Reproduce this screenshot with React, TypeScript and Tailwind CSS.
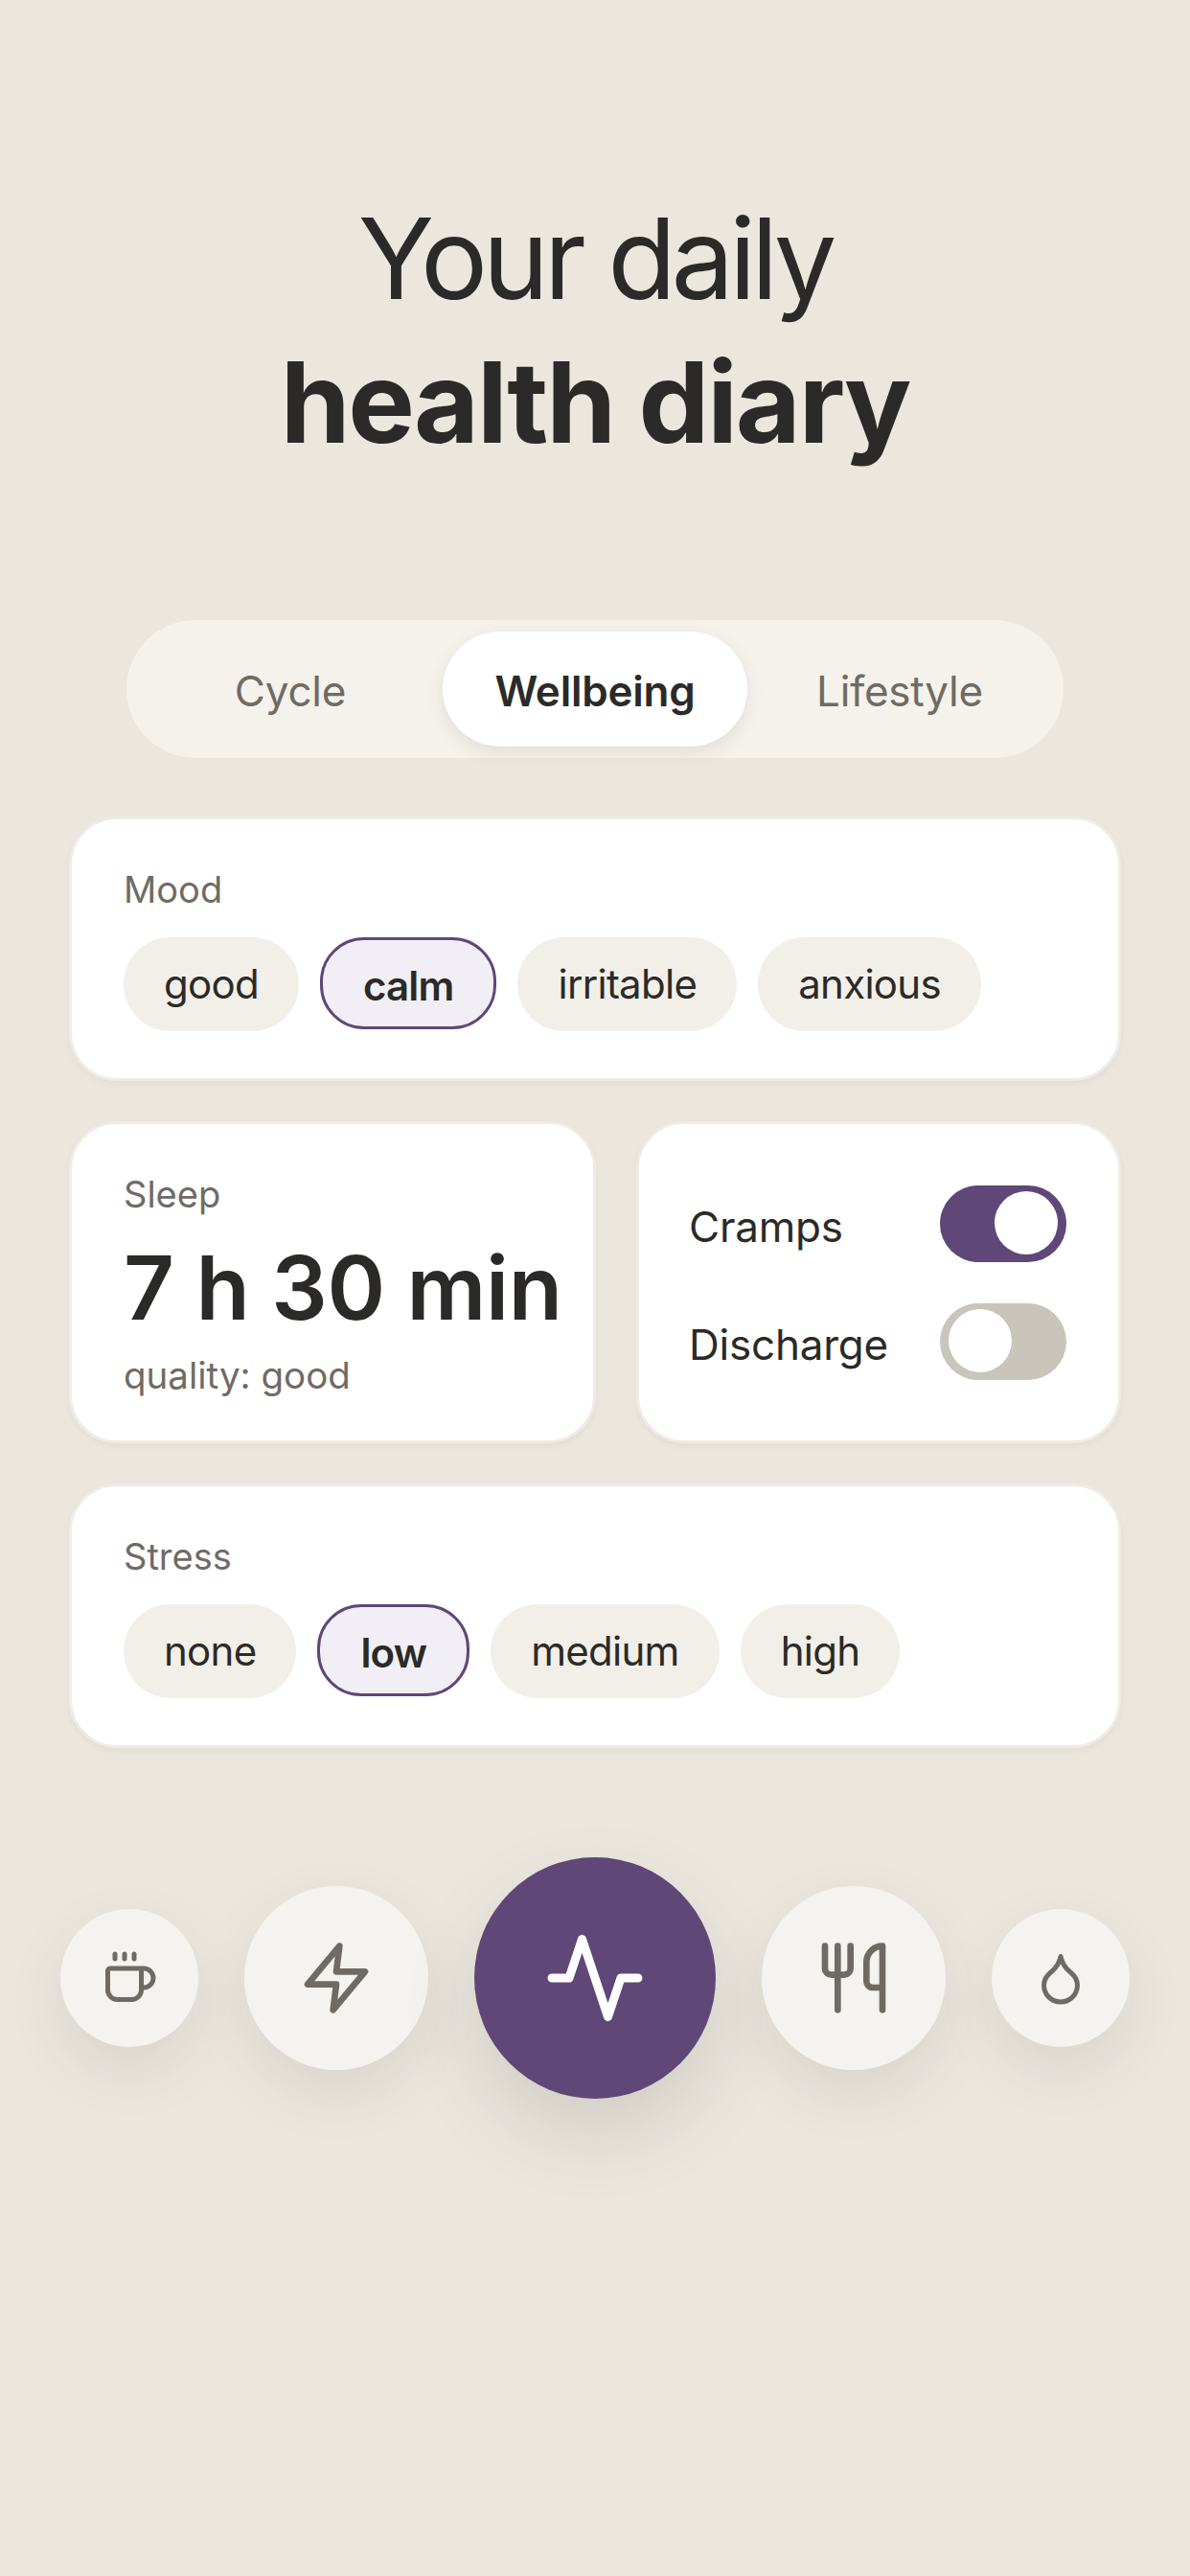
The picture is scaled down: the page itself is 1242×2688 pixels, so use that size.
import { Coffee, Droplet, Utensils } from "lucide-react";

function Chip({ label, active }: { label: string; active?: boolean }) {
  if (active) {
    return (
      <span className="flex h-[96px] items-center rounded-[46px] border-[3px] border-[#5f4778] bg-[#f1eff5] px-[42px] pt-[5px] text-[42px] font-semibold tracking-[-0.02em] text-[#2b2a28]">
        {label}
      </span>
    );
  }
  return (
    <span className="flex h-[98px] items-center rounded-[49px] bg-[#f2efe8] px-[42px] pb-[2px] text-[42px] tracking-[-0.017em] text-[#2b2a28]">{label}</span>
  );
}

function ChipCard({ title, chips, active }: { title: string; chips: string[]; active: string }) {
  return (
    <section className="flex h-[276px] flex-col rounded-[50px] border-[3px] border-[#f0ece5] bg-white px-[54px] pt-[50px] shadow-[0_3px_6px_rgba(60,50,40,0.05)]">
      <p className="text-[38px] leading-[46px] text-[#6f6b64]">{title}</p>
      <div className="mt-[27px] flex items-start gap-[22px]">
        {chips.map((chip) => (
          <Chip key={chip} label={chip} active={chip === active} />
        ))}
      </div>
    </section>
  );
}

function Toggle({ label, on }: { label: string; on?: boolean }) {
  return (
    <div className="flex items-center justify-between">
      <span className="pt-[6px] text-[44px] tracking-[-0.005em] text-[#2b2a28]">{label}</span>
      <span className={`flex h-[80px] w-[132px] items-start rounded-full px-[9px] pt-[6px] ${on ? "justify-end bg-[#5f4778]" : "justify-start bg-[#c9c5ba]"}`}>
        <span className="h-[66px] w-[66px] rounded-full bg-white" />
      </span>
    </div>
  );
}

function RoundButton({ size, children }: { size: "sm" | "md"; children: React.ReactNode }) {
  const box = size === "sm" ? "h-[144px] w-[144px]" : "h-[192px] w-[192px]";
  return (
    <div className={`flex ${box} items-center justify-center rounded-full bg-[#f5f3ef] text-[#6f6b64] shadow-[0_24px_60px_rgba(60,50,40,0.10)]`}>
      {children}
    </div>
  );
}

export default function App() {
  return (
    <main className="min-h-[2688px] bg-[#ebe7df] pt-[195px] font-['Inter',sans-serif] text-[#2b2a28]">
      <h1 className="text-center text-[117px] leading-[150px]">
        <span className="block font-normal tracking-[-0.045em]">Your daily</span>
        <span className="block font-bold tracking-[-0.018em]">health diary</span>
      </h1>

      <nav className="mx-[132px] mt-[152px] flex h-[144px] items-center rounded-[72px] bg-[#f5f2ec] px-[12px] text-[44px] tracking-[-0.005em] text-[#6f6b64]">
        <span className="flex h-[120px] w-[318px] items-center justify-center pt-[4px]">Cycle</span>
        <span className="flex h-[120px] w-[318px] items-center justify-center rounded-[60px] bg-white pt-[4px] font-semibold text-[#2b2a28] shadow-[0_6px_18px_rgba(60,50,40,0.10)]">
          Wellbeing
        </span>
        <span className="flex h-[120px] w-[318px] items-center justify-center pt-[4px]">Lifestyle</span>
      </nav>

      <div className="mx-[72px] mt-[61px] flex flex-col gap-[42px]">
        <ChipCard title="Mood" chips={["good", "calm", "irritable", "anxious"]} active="calm" />

        <div className="flex gap-[42px]">
          <section className="h-[336px] w-[550px] rounded-[50px] border-[3px] border-[#f0ece5] bg-white pl-[54px] pt-[50px] shadow-[0_3px_6px_rgba(60,50,40,0.05)]">
            <p className="text-[38px] leading-[46px] text-[#6f6b64]">Sleep</p>
            <p className="mt-[20px] whitespace-nowrap text-[92px] font-semibold leading-[110px] tracking-[-0.004em] text-[#2b2a28]">7 h 30 min</p>
            <p className="mt-[13px] text-[38.5px] leading-[46px] text-[#6f6b64]">quality: good</p>
          </section>
          <section className="flex h-[336px] flex-1 flex-col justify-center gap-[43px] rounded-[50px] border-[3px] border-[#f0ece5] bg-white pl-[52px] pr-[54px] shadow-[0_3px_6px_rgba(60,50,40,0.05)]">
            <Toggle label="Cramps" on />
            <Toggle label="Discharge" />
          </section>
        </div>

        <ChipCard title="Stress" chips={["none", "low", "medium", "high"]} active="low" />
      </div>

      <div className="mt-[114px] flex items-center justify-center gap-[48px]">
        <RoundButton size="sm">
          <Coffee size={60} strokeWidth={2} />
        </RoundButton>
        <RoundButton size="md">
          <svg width={80} height={80} viewBox="0 0 24 24" fill="none" stroke="currentColor" strokeWidth={2} strokeLinecap="round" strokeLinejoin="round">
            <polygon points="13 2 3 14 12 14 11 22 21 10 12 10 13 2" />
          </svg>
        </RoundButton>
        <div className="flex h-[252px] w-[252px] items-center justify-center rounded-full bg-[#5f4778] text-white shadow-[0_36px_80px_rgba(60,50,40,0.14)]">
          <svg width={108} height={108} viewBox="0 0 24 24" fill="none" stroke="currentColor" strokeWidth={2} strokeLinecap="round" strokeLinejoin="round">
            <polyline points="22 12 18 12 15 21 9 3 6 12 2 12" />
          </svg>
        </div>
        <RoundButton size="md">
          <Utensils size={80} strokeWidth={2} />
        </RoundButton>
        <RoundButton size="sm">
          <Droplet size={60} strokeWidth={2} />
        </RoundButton>
      </div>
    </main>
  );
}
